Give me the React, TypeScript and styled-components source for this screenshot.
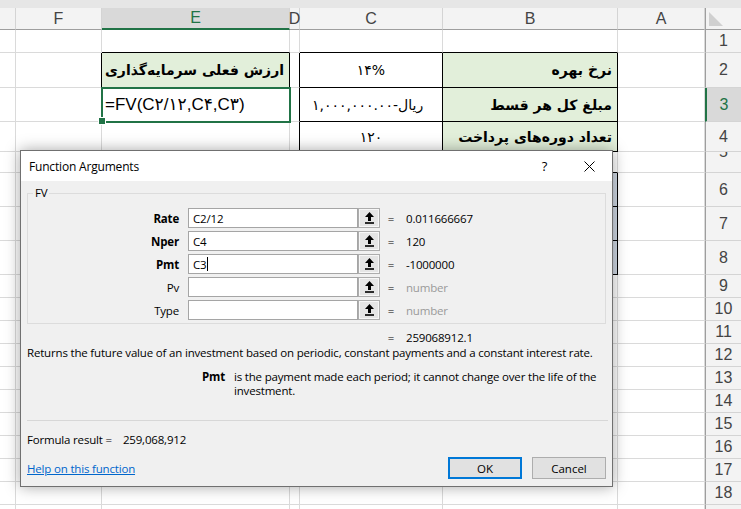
import React from "react";
import styled, { createGlobalStyle } from "styled-components";

const UI_FONT = `"Open Sans", "Noto Sans", sans-serif`;
const SHEET_FONT = `"Liberation Sans", Arial, "DejaVu Sans", sans-serif`;
const FA_FONT = `"DejaVu Sans", sans-serif`;
const GRID = "#dadada";
const GREEN = "#217346";

const GlobalStyle = createGlobalStyle`
  html, body { margin: 0; padding: 0; background: #fff; }
  body { width: 741px; height: 509px; overflow: hidden; font-family: ${SHEET_FONT}; }
  * { box-sizing: border-box; }
`;

const COLS = "16px 86px 188px 10px 143px 175px 87px 36px";

type ColKey = "g" | "f" | "e" | "d" | "c" | "b" | "a";
const COL_KEYS: ColKey[] = ["g", "f", "e", "d", "c", "b", "a"];
const HEAD_LETTERS: Record<ColKey, string> = { g: "", f: "F", e: "E", d: "D", c: "C", b: "B", a: "A" };

type CellSpec = {
  content?: React.ReactNode;
  fill?: string;
  rb?: boolean;
  bb?: boolean;
  kind?: "label" | "center" | "amount" | "formula";
  selected?: boolean;
};

type RowSpec = {
  n: number;
  h: number;
  active?: boolean;
  peek?: boolean;
  hideLabel?: boolean;
  cells?: Partial<Record<ColKey, CellSpec>>;
};

const LABEL_FILL = "#e2efda";
const BLUE_FILL = "#cfd8e3";

const rows: RowSpec[] = [
  { n: 1, h: 23, cells: { e: { bb: true }, c: { bb: true }, b: { bb: true } } },
  {
    n: 2,
    h: 35,
    cells: {
      f: { rb: true },
      e: { content: "ارزش فعلی سرمایه‌گذاری", kind: "label", fill: LABEL_FILL, rb: true, bb: true },
      d: { rb: true },
      c: { content: "۱۴%", kind: "center", rb: true, bb: true },
      b: { content: "نرخ بهره", kind: "label", fill: LABEL_FILL, rb: true, bb: true },
    },
  },
  {
    n: 3,
    h: 34,
    active: true,
    cells: {
      e: { content: "=FV(C۲/۱۲,C۴,C۳)", kind: "formula", selected: true },
      d: { rb: true },
      c: { content: "۱,۰۰۰,۰۰۰.۰۰-ریال", kind: "amount", rb: true, bb: true },
      b: { content: "مبلغ کل هر قسط", kind: "label", fill: LABEL_FILL, rb: true, bb: true },
    },
  },
  {
    n: 4,
    h: 30,
    cells: {
      d: { rb: true },
      c: { content: "۱۲۰", kind: "center", rb: true, bb: true },
      b: { content: "تعداد دوره‌های پرداخت", kind: "label", fill: LABEL_FILL, rb: true, bb: true },
    },
  },
  { n: 5, h: 21, peek: true, cells: { b: { bb: true } } },
  { n: 6, h: 34, cells: { b: { fill: BLUE_FILL, rb: true, bb: true } } },
  { n: 7, h: 34, cells: { b: { fill: BLUE_FILL, rb: true, bb: true } } },
  { n: 8, h: 34, cells: { b: { fill: BLUE_FILL, rb: true, bb: true } } },
  ...Array.from({ length: 10 }, (_, i) => ({ n: 9 + i, h: 23 })),
  { n: 19, h: 23, hideLabel: true },
];

type Arg = { name: string; required: boolean; value: string; result?: string; caret?: boolean };

const args: Arg[] = [
  { name: "Rate", required: true, value: "C2/12", result: "0.011666667" },
  { name: "Nper", required: true, value: "C4", result: "120" },
  { name: "Pmt", required: true, value: "C3", result: "-1000000", caret: true },
  { name: "Pv", required: false, value: "" },
  { name: "Type", required: false, value: "" },
];

export default function App() {
  return (
    <Screen>
      <GlobalStyle />
      <TopStrip />
      <HeaderRow>
        {COL_KEYS.map((k) => (
          <ColHead key={k} $active={k === "e"}>
            {HEAD_LETTERS[k]}
          </ColHead>
        ))}
        <Corner>
          <CornerTri />
        </Corner>
      </HeaderRow>

      {rows.map((r) => (
        <SheetRow key={r.n} style={{ height: r.h }}>
          {COL_KEYS.map((k) => {
            const c = r.cells?.[k];
            return (
              <Cell
                key={k}
                $fill={c?.fill}
                $rb={c?.rb}
                $bb={c?.bb}
                $kind={c?.kind}
                $selected={c?.selected}
              >
                {c?.content && (
                  <CellText dir={c.kind === "label" ? "rtl" : "ltr"} $kind={c.kind}>
                    {c.content}
                  </CellText>
                )}
              </Cell>
            );
          })}
          <RowHead $active={r.active} $peek={r.peek}>
            {!r.hideLabel && <RowNum $peek={r.peek}>{r.n}</RowNum>}
          </RowHead>
        </SheetRow>
      ))}

      <Dialog>
        <TitleBar>
          <DialogTitle>Function Arguments</DialogTitle>
          <CaptionBtn>?</CaptionBtn>
          <CaptionBtn>
            <svg width="11" height="11" viewBox="0 0 11 11">
              <path d="M0.5 0.5 L10.5 10.5 M10.5 0.5 L0.5 10.5" stroke="#000" strokeWidth="1" fill="none" />
            </svg>
          </CaptionBtn>
        </TitleBar>
        <Body>
          <Group>
            <Legend>FV</Legend>
            {args.map((a) => (
              <ArgRow key={a.name}>
                <ArgLabel $bold={a.required}>{a.name}</ArgLabel>
                <ArgInput>
                  {a.value}
                  {a.caret && <Caret />}
                </ArgInput>
                <RefBtn>
                  <svg width="9" height="12" viewBox="0 0 9 12">
                    <path d="M4.5 0 L9 5 L6 5 L6 9 L3 9 L3 5 L0 5 Z" fill="#000" />
                    <rect x="0" y="10.2" width="9" height="1.6" fill="#000" />
                  </svg>
                </RefBtn>
                <Eq>=</Eq>
                <ArgValue $hint={!a.result}>{a.result ?? "number"}</ArgValue>
              </ArgRow>
            ))}
          </Group>

          <ResultLine>
            <ResultSpacer />
            <Eq>=</Eq>
            <ArgValue>259068912.1</ArgValue>
          </ResultLine>

          <Desc>
            Returns the future value of an investment based on periodic, constant payments and a constant interest rate.
          </Desc>

          <ArgHelp>
            <HelpName>Pmt</HelpName>
            <HelpText>is the payment made each period; it cannot change over the life of the investment.</HelpText>
          </ArgHelp>

          <Separator />

          <FormulaResult>
            Formula result =<ResultNum>259,068,912</ResultNum>
          </FormulaResult>

          <Footer>
            <HelpLink href="#">Help on this function</HelpLink>
            <Buttons>
              <Btn $primary>OK</Btn>
              <Btn>Cancel</Btn>
            </Buttons>
          </Footer>
        </Body>
      </Dialog>
    </Screen>
  );
}

const Screen = styled.div`
  position: relative;
  width: 741px;
  height: 509px;
  overflow: hidden;
  background: #fff;
`;

const TopStrip = styled.div`
  height: 8px;
  background: #e6e6e6;
`;

const HeaderRow = styled.div`
  display: grid;
  grid-template-columns: ${COLS};
  height: 22px;
  background: #f3f3f3;
`;

const ColHead = styled.div<{ $active?: boolean }>`
  display: flex;
  align-items: center;
  justify-content: center;
  overflow: visible;
  font-size: 16px;
  color: ${({ $active }) => ($active ? GREEN : "#444")};
  background: ${({ $active }) => ($active ? "#d9d9d9" : "transparent")};
  border-right: 1px solid #d4d4d4;
  border-bottom: ${({ $active }) => ($active ? `2px solid ${GREEN}` : "1px solid #9e9e9e")};
  white-space: nowrap;
`;

const Corner = styled.div`
  position: relative;
  border-left: 1px solid #9e9e9e;
  border-bottom: 1px solid #9e9e9e;
  display: flex;
  align-items: flex-end;
  padding: 0 0 3px 3px;
`;

const CornerTri = styled.div`
  width: 0;
  height: 0;
  border-bottom: 14px solid #d0d0d0;
  border-right: 14px solid transparent;
`;

const SheetRow = styled.div`
  display: grid;
  grid-template-columns: ${COLS};
`;

const Cell = styled.div<{
  $fill?: string;
  $rb?: boolean;
  $bb?: boolean;
  $kind?: CellSpec["kind"];
  $selected?: boolean;
}>`
  position: relative;
  display: flex;
  align-items: center;
  justify-content: ${({ $kind }) =>
    $kind === "label" ? "flex-end" : $kind === "center" ? "center" : "flex-start"};
  padding: 0 ${({ $kind }) => ($kind === "label" ? "5px" : "3px")};
  background: ${({ $fill }) => $fill ?? "#fff"};
  border-right: 1px solid ${({ $rb }) => ($rb ? "#000" : GRID)};
  border-bottom: 1px solid ${({ $bb }) => ($bb ? "#000" : GRID)};
  overflow: visible;
  white-space: nowrap;
  ${({ $selected }) =>
    $selected &&
    `
    outline: 2px solid ${GREEN};
    outline-offset: -1px;
    z-index: 2;
    &::after {
      content: "";
      position: absolute;
      left: -4px;
      bottom: -4px;
      width: 6px;
      height: 6px;
      background: ${GREEN};
      border: 1px solid #fff;
    }
  `}
`;

const CellText = styled.span<{ $kind?: CellSpec["kind"] }>`
  font-family: ${({ $kind }) => ($kind === "formula" ? SHEET_FONT : FA_FONT)};
  font-weight: ${({ $kind }) => ($kind === "label" ? 700 : 400)};
  font-size: ${({ $kind }) => ($kind === "formula" ? "17px" : "14px")};
  color: #000;
  padding-left: ${({ $kind }) => ($kind === "amount" ? "9px" : "0")};
`;

const RowHead = styled.div<{ $active?: boolean; $peek?: boolean }>`
  display: flex;
  align-items: ${({ $peek }) => ($peek ? "flex-start" : "center")};
  justify-content: center;
  overflow: hidden;
  font-size: 16px;
  color: ${({ $active }) => ($active ? GREEN : "#444")};
  background: ${({ $active }) => ($active ? "#d9d9d9" : "#f3f3f3")};
  border-left: ${({ $active }) => ($active ? `2px solid ${GREEN}` : "1px solid #9e9e9e")};
  border-bottom: 1px solid #d4d4d4;
`;

const RowNum = styled.span<{ $peek?: boolean }>`
  line-height: 18px;
  margin-top: ${({ $peek }) => ($peek ? "-9px" : "0")};
`;

/* ---------- dialog ---------- */

const Dialog = styled.div`
  position: absolute;
  left: 20px;
  top: 150px;
  width: 593px;
  height: 337px;
  display: flex;
  flex-direction: column;
  background: #f0f0f0;
  border: 1px solid #707070;
  box-shadow: 0 0 14px rgba(0, 0, 0, 0.35);
  font-family: ${UI_FONT};
  font-size: 11.5px;
  letter-spacing: -0.18px;
  color: #000;
`;

const TitleBar = styled.div`
  height: 30px;
  display: flex;
  align-items: center;
  background: #fff;
`;

const DialogTitle = styled.div`
  flex: 1;
  padding-left: 8px;
  font-size: 12px;
`;

const CaptionBtn = styled.div`
  width: 45px;
  height: 30px;
  display: flex;
  align-items: center;
  justify-content: center;
  font-size: 13px;
`;

const Body = styled.div`
  flex: 1;
  display: flex;
  flex-direction: column;
  padding: 0 6px;
`;

const Group = styled.div`
  position: relative;
  margin-top: 12px;
  height: 131px;
  padding-top: 14px;
  border: 1px solid #dcdcdc;
  display: flex;
  flex-direction: column;
  gap: 3px;
`;

const Legend = styled.span`
  position: absolute;
  left: 5px;
  top: -8px;
  padding: 0 2px;
  line-height: 14px;
  background: #f0f0f0;
`;

const ArgRow = styled.div`
  display: flex;
  align-items: center;
  height: 20px;
`;

const ArgLabel = styled.div<{ $bold?: boolean }>`
  width: 151px;
  text-align: right;
  font-weight: ${({ $bold }) => ($bold ? 700 : 400)};
  margin-right: 9px;
`;

const ArgInput = styled.div`
  width: 170px;
  height: 20px;
  display: flex;
  align-items: center;
  padding-left: 4px;
  background: #fff;
  border: 1px solid #a5a5a5;
`;

const Caret = styled.span`
  display: inline-block;
  width: 1px;
  height: 14px;
  background: #000;
  margin-left: 1px;
`;

const RefBtn = styled.div`
  width: 22px;
  height: 20px;
  display: flex;
  align-items: center;
  justify-content: center;
  background: #e5e5e5;
  border: 1px solid #adadad;
  box-shadow: inset 0 0 0 1px #f7f7f7;
`;

const Eq = styled.div`
  width: 22px;
  text-align: center;
`;

const ArgValue = styled.div<{ $hint?: boolean }>`
  padding-left: 4px;
  color: ${({ $hint }) => ($hint ? "#9a9a9a" : "#000")};
`;

const ResultLine = styled.div`
  display: flex;
  align-items: center;
  height: 16px;
  margin-top: 5px;
`;

const ResultSpacer = styled.div`
  width: 353px;
`;

const Desc = styled.div`
  height: 16px;
  line-height: 16px;
  white-space: nowrap;
`;

const ArgHelp = styled.div`
  display: flex;
  margin-top: 9px;
  line-height: 14px;
`;

const HelpName = styled.div`
  width: 207px;
  text-align: right;
  font-weight: 700;
  padding-right: 9px;
`;

const HelpText = styled.div`
  width: 368px;
  height: 28px;
`;

const Separator = styled.div`
  height: 1px;
  margin: 22px -2px 0 0;
  background: #d7d7d7;
`;

const FormulaResult = styled.div`
  margin-top: 11px;
  height: 16px;
  line-height: 16px;
`;

const ResultNum = styled.span`
  margin-left: 11px;
`;

const Footer = styled.div`
  display: flex;
  align-items: center;
  justify-content: space-between;
  margin-top: 9px;
  height: 22px;
`;

const HelpLink = styled.a`
  color: #0066cc;
  text-decoration: underline;
`;

const Buttons = styled.div`
  display: flex;
  gap: 10px;
`;

const Btn = styled.button<{ $primary?: boolean }>`
  width: 74px;
  height: 22px;
  padding: 0;
  font-family: ${UI_FONT};
  font-size: 11.5px;
  color: #000;
  background: #e1e1e1;
  border: ${({ $primary }) => ($primary ? "2px solid #0078d7" : "1px solid #adadad")};
`;
